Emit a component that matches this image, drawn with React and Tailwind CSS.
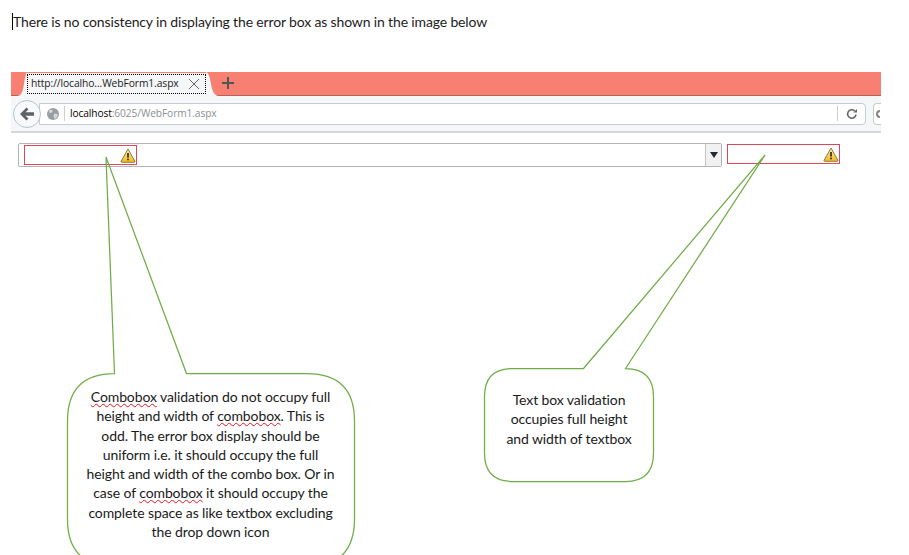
import React from "react";

function WarnIcon() {
  return (
    <svg width="16" height="15" viewBox="0 0 16 15" className="shrink-0">
      <defs>
        <linearGradient id="warnFill" x1="0" y1="0" x2="0" y2="1">
          <stop offset="0" stopColor="#fff3b0" />
          <stop offset="1" stopColor="#f5b916" />
        </linearGradient>
      </defs>
      <path d="M8 1 L15 13.5 Q15 14.3 14 14.3 L2 14.3 Q1 14.3 1 13.5 Z" fill="url(#warnFill)" stroke="#8a7a45" strokeWidth="1" strokeLinejoin="round" />
      <rect x="7.2" y="5" width="1.6" height="4.6" fill="#222" />
      <rect x="7.2" y="10.6" width="1.6" height="1.7" fill="#222" />
    </svg>
  );
}

function Callouts() {
  return (
    <svg width="909" height="555" className="absolute left-0 top-0" fill="none" stroke="#70ad47" strokeWidth="1.25">
      <path d="M114.5 373.5 L106 157 L186.5 373.5 L307 373.5 Q354.5 373.5 354.5 421 L354.5 519 Q354.5 566.5 307 566.5 L114.5 566.5 Q67.5 566.5 67.5 519 L67.5 421 Q67.5 373.5 114.5 373.5 Z" />
      <path d="M583.5 368.5 L765 155 L625.5 368.5 L625.5 368.5 Q653.5 368.5 653.5 396.5 L653.5 453 Q653.5 481.5 625.5 481.5 L512.5 481.5 Q484.5 481.5 484.5 453 L484.5 396.5 Q484.5 368.5 512.5 368.5 Z" />
    </svg>
  );
}

function Spell({ children }) {
  return <span className="underline decoration-wavy decoration-[#e81123] decoration-1 underline-offset-1">{children}</span>;
}

export default function App() {
  return (
    <div className="relative w-[909px] h-[555px] overflow-hidden bg-white text-black font-['Lato','Noto_Sans',sans-serif]">
      {/* Kalimat pembuka */}
      <div className="h-[72px] pl-3 pt-[12px] text-[14px] tracking-[-0.15px] leading-[20px] text-[#1c1c1c]">
        <span className="border-l border-black">There is no consistency in displaying the error box as shown in the image below</span>
      </div>

      {/* Browser */}
      <div className="ml-[11px] w-[870px]">
        <div className="h-[24px] flex items-end bg-[#f88072] border-b border-[#b5635a]">
          <svg width="10" height="24" viewBox="0 0 10 24" fill="#f5f6f7" className="ml-[6px] shrink-0 -mb-px"><path d="M0 24 C5 24 6 18 7 12 C8 5 9 1 10 0 V24 Z" /></svg>
          <div className="w-[179px] h-[23px] bg-[#f5f6f7] -mb-px flex items-start pt-px text-[10.3px] text-[#222] font-['Open_Sans',sans-serif]">
            <span className="h-[20px] border border-dotted border-black flex items-center pl-[3px] whitespace-nowrap tracking-[-0.1px] flex-1">http://localho...WebForm1.aspx
              <svg width="12" height="12" viewBox="0 0 12 12" className="ml-[9px] shrink-0" stroke="#666" strokeWidth="1" fill="none"><path d="M1 1 L11 11 M11 1 L1 11" /></svg>
            </span>
          </div>
          <svg width="13" height="24" viewBox="0 0 13 24" fill="#f5f6f7" className="shrink-0 -mb-px"><path d="M0 0 C3 1 4 6 5 12 C6 18 8 24 13 24 H0 Z" /></svg>
          <svg width="14" height="14" viewBox="0 0 14 14" className="ml-[2px] mb-[5px]" stroke="#555" strokeWidth="2" fill="none"><path d="M7 1 V13 M1 7 H13" /></svg>
        </div>

        <div className="h-[37px] flex items-center bg-[#f5f6f7] border-b-2 border-[#d4d6d8]">
          <div className="relative z-10 ml-[2px] w-[28px] h-[28px] rounded-full bg-[#f8f9fa] border border-[#b9c4d0] flex items-center justify-center">
            <svg width="16" height="14" viewBox="0 0 16 14" fill="#5f6368"><path d="M7.5 0.5 L9.5 2.5 L6.5 5.3 H15 V8.7 H6.5 L9.5 11.5 L7.5 13.5 L1 7 Z" /></svg>
          </div>
          <div className="-ml-[2px] w-[827px] h-[22px] bg-white border border-[#c5cbd1] rounded-r-sm flex items-center pl-[6px]">
            <svg width="14" height="14" viewBox="0 0 14 14" className="shrink-0">
              <circle cx="7" cy="7" r="6" fill="#9a9ea3" />
              <path d="M3 3 Q6 2 7 4 Q6 6 3.5 6 Z M8 7 Q11 6 12 8 Q11 11 8.5 12 Q7 9 8 7 Z" fill="#d6d8da" />
            </svg>
            <div className="ml-[4px] w-px h-[15px] bg-[#ccd0d4]" />
            <span className="ml-[5px] text-[10.2px] text-[#8a8f94] font-['Open_Sans',sans-serif] whitespace-nowrap tracking-[-0.1px]"><span className="text-black">localhost</span>:6025/WebForm1.aspx</span>
            <div className="ml-auto w-px h-[15px] bg-[#ccd0d4]" />
            <div className="w-[27px] flex justify-center">
              <svg width="12" height="12" viewBox="0 0 12 12" fill="none" stroke="#666" strokeWidth="1.6"><path d="M10 6.5 A4.2 4.2 0 1 1 8.6 2.8" /><path d="M7.3 4.6 H11 V1 Z" fill="#666" stroke="none" /></svg>
            </div>
          </div>
          <div className="ml-[7px] flex-1 h-[22px] bg-white border border-r-0 border-[#c5cbd1] rounded-l-sm flex items-center pl-[2px]">
            <span className="w-[4px] h-[8px] border-2 border-r-0 border-[#888] rounded-l-full" />
          </div>
        </div>

        {/* Field validasi */}
        <div className="pl-[7px] pt-[10px] flex items-start">
          <div className="w-[704px] h-[24px] border border-[#b4b4b4] rounded-[2px] flex items-start bg-white">
            <div className="ml-[5px] mt-px w-[113px] h-[20px] border border-[#e0455a] flex items-center justify-end">
              <WarnIcon />
            </div>
            <div className="ml-auto w-[16px] h-full border-l border-[#c4c4c4] bg-[#f1f1f1] flex items-center justify-center">
              <svg width="8" height="6" viewBox="0 0 8 6" fill="#1f2a36"><path d="M0 0 H8 L4 6 Z" /></svg>
            </div>
          </div>
          <div className="ml-[5px] mt-px w-[113px] h-[20px] border border-[#e0455a] flex items-center justify-end">
            <WarnIcon />
          </div>
        </div>
      </div>

      <Callouts />

      {/* Teks callout */}
      <div className="absolute left-[67px] top-[387px] w-[287px] text-center text-[14px] tracking-[-0.1px] leading-[19.3px] text-[#1a1a1a]">
        <Spell>Combobox</Spell> validation do not occupy full<br />
        height and width of <Spell>combobox</Spell>. This is<br />
        odd. The error box display should be<br />
        uniform i.e. it should occupy the full<br />
        height and width of the combo box. Or in<br />
        case of <Spell>combobox</Spell> it should occupy the<br />
        complete space as like textbox excluding<br />
        the drop down icon
      </div>
      <div className="absolute left-[484px] top-[390px] w-[170px] text-center text-[14px] tracking-[-0.1px] leading-[19.3px] text-[#1a1a1a]">
        Text box validation<br />
        occupies full height<br />
        and width of textbox
      </div>
    </div>
  );
}
